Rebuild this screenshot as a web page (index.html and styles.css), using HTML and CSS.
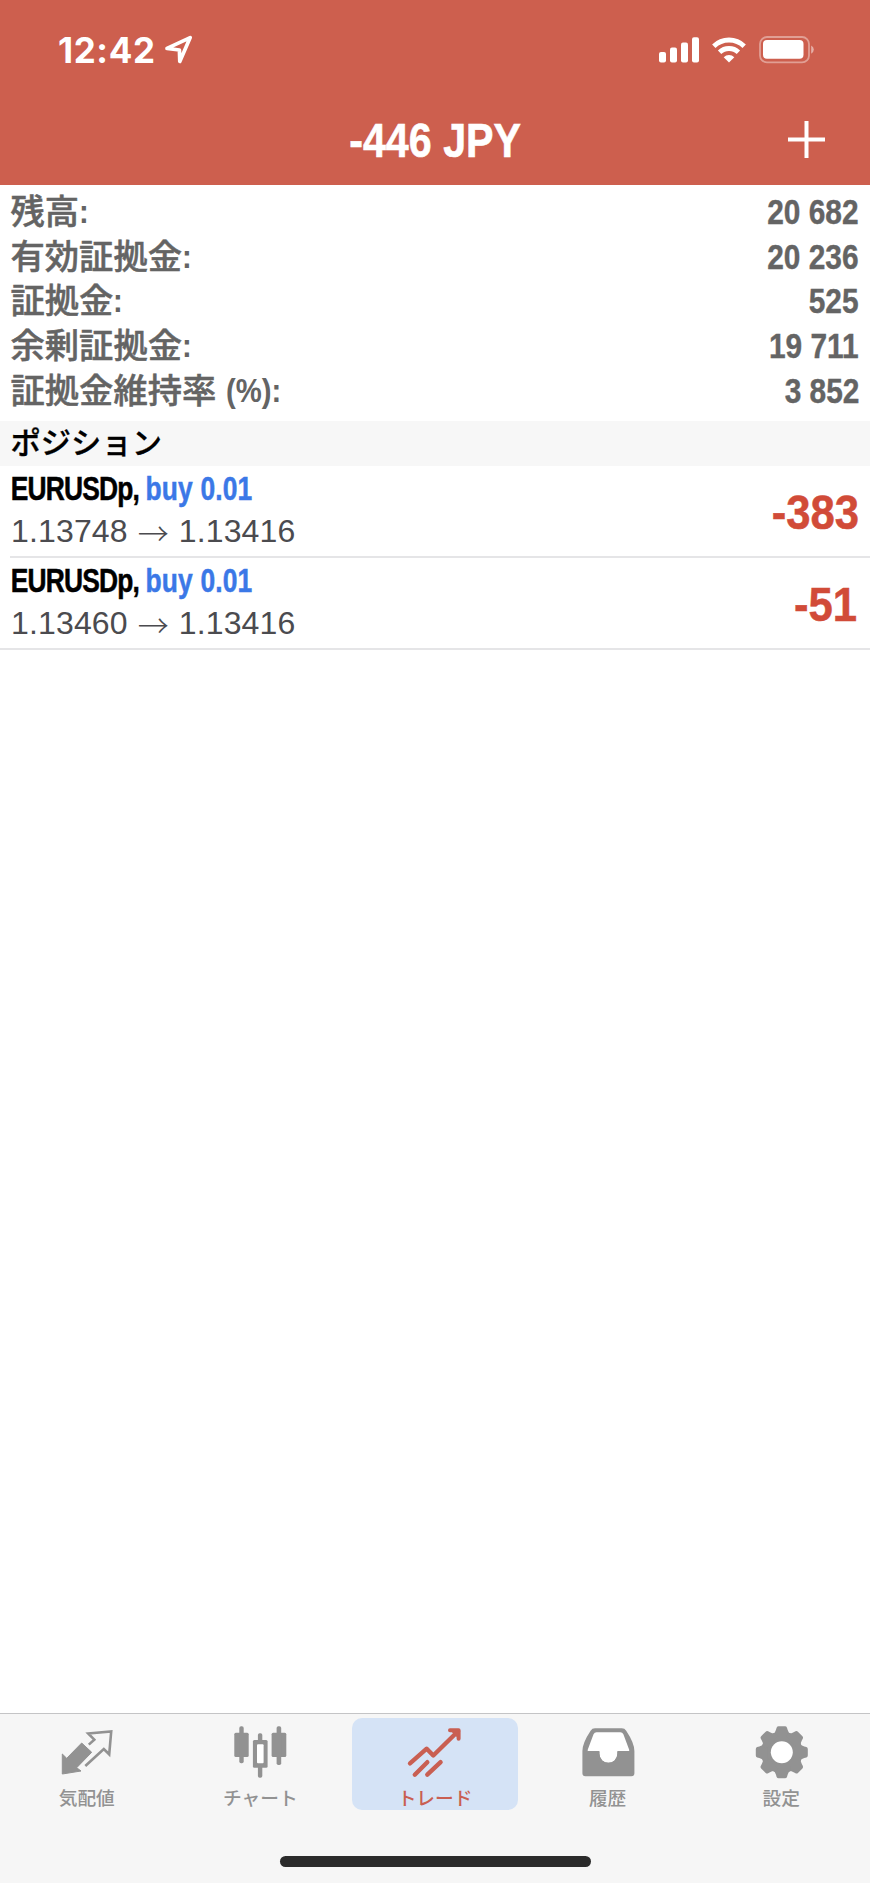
FILE: index.html
```html
<!DOCTYPE html>
<html lang="ja">
<head>
<meta charset="utf-8">
<title>トレード</title>
<link rel="stylesheet" href="styles.css">
</head>
<body>
<div class="screen">
  <header class="header">
    <div class="status">
      <span class="time">12:42</span>
      <svg class="location" width="30" height="30" viewBox="0 0 30 30"><path d="M3 13.4 26.2 2.6 15.8 26.4 15.4 15Z" fill="none" stroke="#fff" stroke-width="3.7" stroke-linejoin="round"/></svg>
      <svg class="signal" width="40" height="26" viewBox="0 0 40 26" fill="#fff"><rect y="15" width="7" height="10.5" rx="2"/><rect x="11" y="10.5" width="7" height="15" rx="2"/><rect x="22" y="5.5" width="7" height="20" rx="2"/><rect x="33" y=".3" width="7" height="25.2" rx="2"/></svg>
      <svg class="wifi" width="34" height="26" viewBox="0 0 34 26" fill="none" stroke="#fff" stroke-width="4.8"><path d="M1.8 9.2a21.7 21.7 0 0 1 30.4 0"/><path d="M7.6 15.3a13.5 13.5 0 0 1 18.8 0"/><path d="M17 25.6 11.7 20.2a7.6 7.6 0 0 1 10.6 0Z" fill="#fff" stroke="none"/></svg>
      <svg class="battery" width="56" height="28" viewBox="0 0 56 28"><rect x="1" y="1" width="49" height="25.4" rx="7" fill="none" stroke="#fff" stroke-opacity=".4" stroke-width="1.8"/><rect x="4" y="4" width="40.5" height="18.8" rx="4" fill="#fff"/><path d="M52.2 9.4q2.6 1.4 2.6 4.2t-2.6 4.2Z" fill="#fff" fill-opacity=".5"/></svg>
    </div>
    <div class="nav">
      <h1 class="title"><span>-446 JPY</span></h1>
      <svg class="add" width="37" height="37" viewBox="0 0 37 37"><path d="M18.5 0V37M0 18.5H37" stroke="#fff" stroke-width="4"/></svg>
    </div>
  </header>
  <main class="content">
    <dl class="account">
      <div class="row"><dt>残高<span class="colon">:</span></dt><dd>20 682</dd></div>
      <div class="row"><dt>有効証拠金<span class="colon">:</span></dt><dd>20 236</dd></div>
      <div class="row"><dt>証拠金<span class="colon">:</span></dt><dd>525</dd></div>
      <div class="row"><dt>余剰証拠金<span class="colon">:</span></dt><dd>19 711</dd></div>
      <div class="row"><dt>証拠金維持率<span class="colon percent">(%):</span></dt><dd>3 852</dd></div>
    </dl>
    <h2 class="section">ポジション</h2>
    <article class="position">
      <div class="details">
        <div class="symbol">EURUSDp, <span class="side">buy 0.01</span></div>
        <div class="prices"><span>1.13748</span><span class="arrow">→</span><span>1.13416</span></div>
      </div>
      <div class="profit">-383</div>
    </article>
    <article class="position last">
      <div class="details">
        <div class="symbol">EURUSDp, <span class="side">buy 0.01</span></div>
        <div class="prices"><span>1.13460</span><span class="arrow">→</span><span>1.13416</span></div>
      </div>
      <div class="profit ends-one">-51</div>
    </article>
  </main>
  <footer class="footer">
    <nav class="tabs">
      <div class="tab">
        <svg class="icon" viewBox="0 0 60 60"><path d="M5.3 52V32L9.7 36.3 24.7 21 34.7 30.3 19.7 45.7 24 49Z" fill="currentColor" stroke="currentColor" stroke-linejoin="round"/><path d="M31.8 22.6 37.3 17.7 31.2 11.5 54.2 9.5 52.2 32.3 46.8 27 28.3 44" fill="none" stroke="currentColor" stroke-width="2.6"/></svg>
        <span>気配値</span>
      </div>
      <div class="tab">
        <svg class="icon" viewBox="0 0 60 60" fill="currentColor"><rect x="4.3" y="10.7" width="14.4" height="24.2" rx="1.5"/><rect x="9.3" y="4.3" width="4.4" height="37" rx="1.8"/><rect x="27.9" y="11.3" width="4.4" height="44.4" rx="1.8"/><rect x="22.9" y="18" width="14.7" height="27.7" rx="1.5"/><rect class="hollow" x="27" y="22.3" width="6.6" height="19" rx="1"/><rect x="41.6" y="10.7" width="14.7" height="24.2" rx="1.5"/><rect x="46.6" y="4.3" width="4.6" height="38.7" rx="1.8"/></svg>
        <span>チャート</span>
      </div>
      <div class="tab active">
        <svg class="icon" viewBox="0 0 60 60" fill="none" stroke="currentColor" stroke-width="4.4" stroke-linecap="round" stroke-linejoin="round"><path d="M5 41.3 21.7 26.7 28.3 33.5 53 9.3M9.8 52.7 22.3 40.2M22.3 52.7 35.6 40.2"/><path d="M45 8.2H53.6V16.8" stroke-width="4"/><path d="M45 8.2H53.6V16.8Z" fill="currentColor" stroke="none"/></svg>
        <span>トレード</span>
      </div>
      <div class="tab">
        <svg class="icon" viewBox="0 0 60 60"><path class="hollow" d="M17 9H44L53 31H8Z"/><path d="M10 29H51V42H10Z" fill="currentColor"/><path class="hollow" d="M21.4 28V31.8A9 9 0 0 0 39.4 31.8V28Z"/><path d="M17 6.3H43.8Q46.7 6.3 48.2 8.7Q56.4 21 56.4 29V51.3Q56.4 54.3 53.4 54.3H7.4Q4.4 54.3 4.4 51.3V29Q4.4 21 12.6 8.7Q14.1 6.3 17 6.3ZM18.5 10.3Q16.5 10.3 15.5 12.3L9.8 27.5Q9.2 29.7 11.4 29.7H21.4V31.8A9 9 0 0 0 39.4 31.8V29.7H49.5Q51.7 29.7 51.1 27.5L45.4 12.3Q44.4 10.3 42.4 10.3Z" fill="currentColor" fill-rule="evenodd"/></svg>
        <span>履歴</span>
      </div>
      <div class="tab">
        <svg class="icon" viewBox="0 0 60 60"><g transform="translate(30.8 30.3)" fill="currentColor"><circle r="20.8"/><path id="tooth" d="M-8.8-18Q-6.8-19-5.8-22.5L-5.2-24.6Q-4.6-26-3.2-26H3.2Q4.6-26 5.2-24.6L5.8-22.5Q6.8-19 8.8-18V-14H-8.8Z"/><use href="#tooth" transform="rotate(45)"/><use href="#tooth" transform="rotate(90)"/><use href="#tooth" transform="rotate(135)"/><use href="#tooth" transform="rotate(180)"/><use href="#tooth" transform="rotate(225)"/><use href="#tooth" transform="rotate(270)"/><use href="#tooth" transform="rotate(315)"/><circle class="hollow" r="11"/></g></svg>
        <span>設定</span>
      </div>
    </nav>
    <div class="home-indicator"></div>
  </footer>
</div>
</body>
</html>
```
FILE: styles.css
```css
* { box-sizing: border-box; }
body { margin: 0; background: #fff; }
h1, h2, dl, dd { margin: 0; }
svg { display: block; flex: none; }

.screen {
  width: 870px;
  height: 1883px;
  display: flex;
  flex-direction: column;
  overflow: hidden;
  font-family: "Liberation Sans", "Noto Sans CJK JP", sans-serif;
}

.header { height: 185px; background: #cd5f4e; color: #fff; }
.status { display: flex; align-items: center; height: 99px; padding: 0 55px 0 58px; }
.time { width: 106px; font: 700 35px/40px Inter, sans-serif; letter-spacing: .6px; }
.location { margin-right: auto; }
.signal { margin-right: 13px; }
.wifi { margin-right: 13px; }
.nav { display: grid; grid-template-columns: 1fr auto 1fr; align-items: center; height: 81px; padding: 0 45px; }
.title { grid-column: 2; padding-top: 1px; font-size: 48.5px; line-height: 56px; font-weight: 700; white-space: nowrap; }
.title span { display: block; transform: scaleX(.85); -webkit-text-stroke: .6px; }
.add { justify-self: end; }

.content { flex: 1; }
.account { height: 236px; padding: 5px 11px 0 10px; color: #646464; }
.row { display: flex; justify-content: space-between; height: 44.7px; font-weight: 700; }
.row dt { display: flex; height: 44px; padding-left: .5px; font: 500 34.3px/38px "Noto Sans CJK JP", sans-serif; white-space: nowrap; -webkit-text-stroke: .5px; }
.colon { font: 700 34px/43px "Liberation Sans", sans-serif; transform: scaleX(.86); transform-origin: left; -webkit-text-stroke: 0; }
.percent { margin-left: 9.5px; }
.row dd { font-size: 34.5px; line-height: 44px; transform: scaleX(.865); transform-origin: right; white-space: nowrap; -webkit-text-stroke: .4px; }

.section { height: 45px; padding-left: 10.5px; background: #f7f7f7; font: 500 30.3px/40px "Noto Sans CJK JP", sans-serif; -webkit-text-stroke: .3px; }
.position { display: flex; justify-content: space-between; align-items: center; height: 91.5px; margin-left: 10px; padding-right: 11px; border-bottom: 2px solid #e5e5e7; }
.position.last { height: 92.5px; margin-left: 0; padding-left: 10px; }
.symbol { padding-left: 1px; font-size: 33px; line-height: 42px; font-weight: 700; color: #000; letter-spacing: -1.05px; transform: scaleX(.8); transform-origin: left; white-space: nowrap; -webkit-text-stroke: .5px; }
.side { color: #3b78e7; letter-spacing: .2px; }
.prices { display: flex; align-items: center; height: 44px; padding-left: 1px; font-size: 32px; line-height: 43px; letter-spacing: .15px; color: #4b4b4f; }
.arrow { width: 51px; font: 300 31px/38px "Noto Sans CJK JP", sans-serif; text-align: center; }
.profit { padding-top: 3px; font-size: 48.5px; font-weight: 700; color: #d14b38; transform: scaleX(.9); transform-origin: right; -webkit-text-stroke: .5px; }
.profit.ends-one { margin-right: 2px; }

.footer { height: 170px; background: #f6f6f6; border-top: 1px solid #c4c4c6; }
.tabs { display: flex; justify-content: space-between; height: 96px; padding: 4px 2px 0 0; }
.tab { display: flex; flex-direction: column; align-items: center; width: 166.5px; height: 92px; margin: 0 3.5px; padding-top: 4px; border-radius: 10px; color: #929292; font: 500 18.7px/27px "Noto Sans CJK JP", sans-serif; }
.tab.active { margin: 0 2.5px 0 4.5px; background: #d5e3f6; color: #c95f52; }
.icon { width: 60px; height: 60px; margin-bottom: 1px; }
.hollow { fill: #fff; }
.home-indicator { width: 311px; height: 11px; margin: 46px auto 0; border-radius: 6px; background: #2b2b2b; }
```
